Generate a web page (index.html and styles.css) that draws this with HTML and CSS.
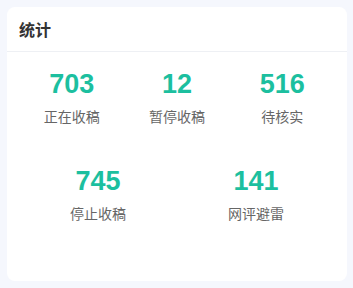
FILE: index.html
```html
<!DOCTYPE html>
<html lang="zh">
<head>
<meta charset="utf-8">
<link rel="stylesheet" href="styles.css">
</head>
<body>
<div class="page">
  <div class="card">
    <div class="card-header">统计</div>
    <div class="card-body">
      <div class="row row-3">
        <div class="stat"><div class="num">703</div><div class="label">正在收稿</div></div>
        <div class="stat"><div class="num">12</div><div class="label">暂停收稿</div></div>
        <div class="stat"><div class="num">516</div><div class="label">待核实</div></div>
      </div>
      <div class="row row-2">
        <div class="stat"><div class="num">745</div><div class="label">停止收稿</div></div>
        <div class="stat"><div class="num">141</div><div class="label">网评避雷</div></div>
      </div>
    </div>
  </div>
</div>
</body>
</html>
```
FILE: styles.css
```css
html, body {
  margin: 0;
  padding: 0;
  background: #f5f7fd;
}
body {
  font-family: "Liberation Sans", "Noto Sans CJK SC", sans-serif;
}
.page {
  padding: 7px 6px 7px 7px;
}
.card {
  background: #ffffff;
  border-radius: 8px;
  height: 274px;
  box-sizing: border-box;
}
.card-header {
  height: 44px;
  line-height: 44px;
  padding: 0 12px;
  font-family: "Noto Sans CJK SC", sans-serif;
  font-size: 16px;
  font-weight: 700;
  color: #333333;
  border-bottom: 1px solid #eef0f4;
}
.card-body {
  padding: 16px 12px 0 12px;
}
.row {
  display: grid;
}
.row-3 {
  grid-template-columns: repeat(3, 1fr);
}
.row-2 {
  grid-template-columns: repeat(2, 1fr);
  margin-top: 39px;
}
.stat {
  text-align: center;
}
.num {
  font-family: "Liberation Sans", Arial, sans-serif;
  font-weight: 700;
  font-size: 27px;
  line-height: 32px;
  color: #1cbf9f;
  margin-bottom: 6px;
}
.label {
  font-family: "Noto Sans CJK SC", sans-serif;
  font-size: 14px;
  line-height: 20px;
  color: #666666;
}
```
